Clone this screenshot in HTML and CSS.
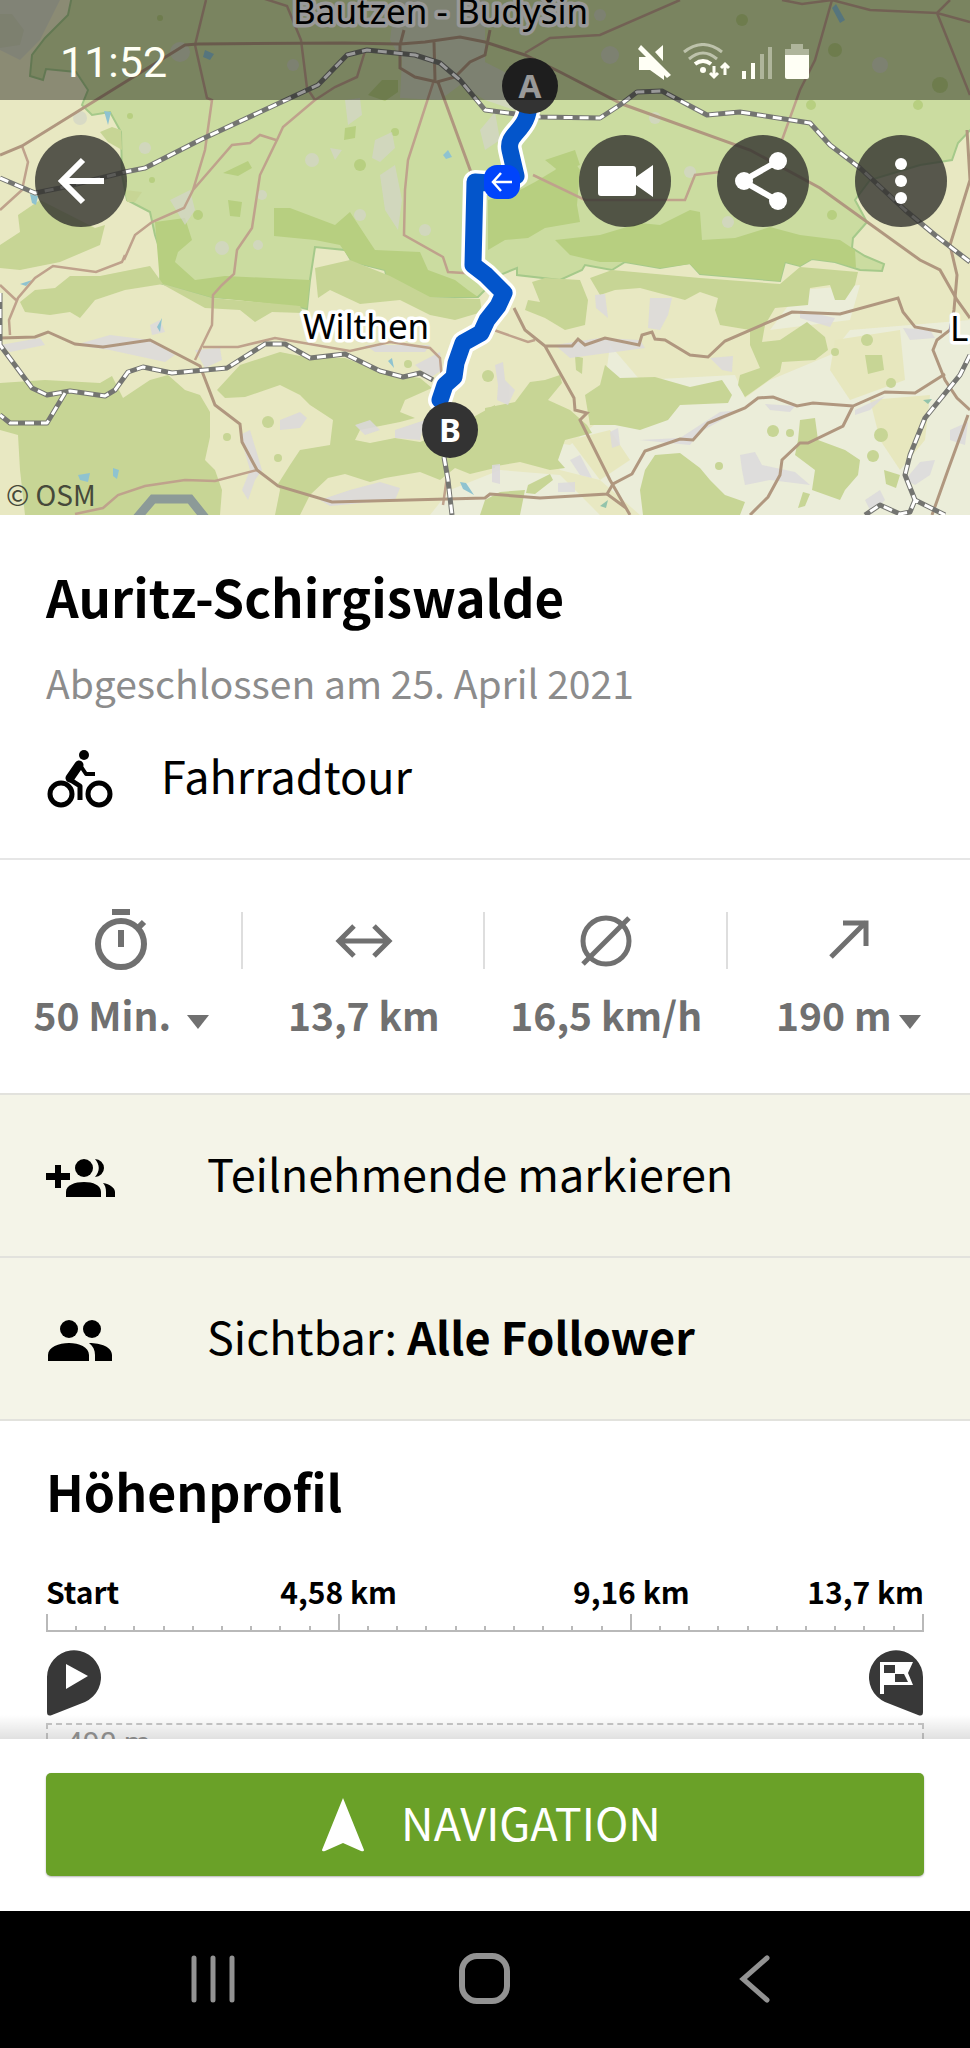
FILE: index.html
```html
<!DOCTYPE html>
<html lang="de">
<head>
<meta charset="utf-8">
<meta name="viewport" content="width=device-width, initial-scale=1">
<title>Auritz-Schirgiswalde</title>
<link rel="stylesheet" href="styles.css">
</head>
<body>
<main class="content">
  <section class="map" aria-label="Karte">
    <svg class="map-canvas" viewBox="0 0 970 515" role="img" aria-label="Route von Bautzen über Wilthen">
      <rect width="970" height="515" fill="#e8e8c2"/>
      <!-- open farmland -->
      <path fill="#ebedd9" d="M610 345 640 380 735 375 745 398 770 380 830 355 850 330 970 320V515H640L600 480 560 470 540 440 570 445 600 420Z M450 490 500 470 560 475 600 515H430Z M800 290 860 285 850 320 770 330Z"/>
      <path fill="#e7e7be" d="M835 340 900 330 905 380 850 400 830 370Z M870 400 930 395 925 440 900 470 880 440Z M570 440 610 430 630 460 600 480Z"/>
      <!-- protected landscape -->
      <path fill="#cbdca0" stroke="#a5c98a" stroke-width="2" d="M72-4 68 15 45 38 32 55 30 76 43 80 46 69 76 72 88 90 82 105 92 115 110 112 121 132 122 175 127 200 150 212 155 235 162 256 160 283 210 297 276 301 307 309 310 280 315 247 345 250 352 262 385 270 388 283 415 288 425 297 478 297 500 275 517 268 517 275 560 280 582 270 585 265 612 270 625 262 660 268 690 263 700 274 780 281 785 262 800 266 812 259 835 262 860 270 882 271 884 264 865 256 852 248 853 238 867 222 855 200 870 180 920 165 952 160 958 143 974 126V-4Z"/>
      <g fill="#b7cf80">
        <path d="M155 222 185 218 192 240 178 252 175 262 195 280 225 276 310 280 307 308 210 297 160 283Z"/>
        <path d="M274 208 290 208 335 225 350 212 367 238 375 250 420 252 428 270 455 280 468 290 478 297 425 297 388 283 385 270 352 262 340 245 315 240 274 236Z"/>
        <path d="M488 200 520 190 535 182 555 170 570 155 580 170 577 205 580 222 545 228 528 238 505 240 488 250Z M545 160 575 150 580 165 560 172Z"/>
        <path d="M555 240 600 235 640 223 660 225 690 210 700 212 702 240 735 238 770 227 800 235 840 240 855 250 856 268 835 262 812 259 800 266 785 262 780 281 700 274 690 264 660 268 625 262 600 262 570 255Z"/>
        <path d="M368 95 382 80 398 80 398 92 385 101Z M223 173 248 161 252 168 238 176Z M228 200 242 202 240 217 230 216Z M345 128 356 126 355 138 344 140Z"/>
        <circle cx="395" cy="132" r="4"/><circle cx="360" cy="165" r="6"/><circle cx="198" cy="215" r="5"/><circle cx="152" cy="180" r="3"/><circle cx="130" cy="116" r="3"/><circle cx="811" cy="105" r="5"/><circle cx="918" cy="105" r="5"/><circle cx="832" cy="215" r="5"/><circle cx="835" cy="50" r="7"/><circle cx="742" cy="20" r="6"/><circle cx="160" cy="18" r="3"/><circle cx="940" cy="85" r="8"/>
      </g>
      <!-- forests -->
      <g fill="#c7d595">
        <path d="M0 14 12 14 24 30 20 45 0 48Z M100 132 112 127 121 130 122 150 108 142Z M0 245 20 232 18 215 40 200 95 228 105 225 100 245 60 262 20 270 0 268Z M125 190 142 192 135 202 127 202Z"/>
        <path d="M25 312 20 302 35 290 55 288 70 276 100 276 150 266 163 284 125 290 95 300 80 318 70 312 50 315Z"/>
        <path d="M0 383 45 380 100 383 112 376 123 398 150 380 168 375 185 390 200 395 210 412 210 437 205 460 215 470 222 490 220 515H25L20 470 18 435 0 430Z"/>
        <path d="M217 390 240 365 280 352 310 358 345 358 385 373 420 378 432 388 405 400 400 412 415 418 400 422 360 430 355 440 370 443 395 438 420 442 450 430 495 405 495 468 470 474 455 468 440 480 420 472 385 478 370 482 345 474 328 478 310 495 300 515H275L280 490 278 484 290 465 300 450 330 445 333 420 310 405 300 395 280 385 245 397 225 398Z"/>
        <path d="M160 283 212 298 300 306 303 313 272 312 255 322 240 310 205 308Z M315 268 350 260 390 276 430 297 480 299 482 312 455 320 430 315 400 300 360 304 330 290 318 298Z"/>
        <path d="M532 282 545 278 580 280 588 300 585 325 565 330 545 318 525 310 528 300 540 302Z"/>
        <path d="M590 278 612 270 700 278 780 284 800 267 858 272 855 285 845 300 835 300 830 285 810 288 808 305 775 308 765 325 762 342 780 340 795 330 807 322 825 337 828 350 815 360 782 362 780 372 762 385 745 397 738 385 740 375 760 368 750 345 750 330 720 325 715 310 718 298 700 292 685 300 640 288 615 290 600 295Z"/>
        <path d="M585 395 600 385 605 365 620 378 655 377 690 387 722 380 732 395 728 403 680 405 668 420 640 430 615 425 590 425Z"/>
        <path d="M485 408 515 402 530 382 545 380 560 375 562 383 548 400 570 410 587 425 592 433 565 440 558 460 565 468 550 470 520 462 485 468Z"/>
        <path d="M645 470 655 455 680 453 700 468 710 480 725 495 745 502 740 515H643L640 490Z"/>
        <path d="M800 420 815 418 818 440 845 450 860 460 858 475 845 490 840 500 812 490 815 470 795 455 798 440Z"/>
        <path d="M528 485 550 474 553 480 535 494 526 493Z M575 356 583 358 582 374 576 370Z M865 355 882 355 884 370 868 374Z M884 470 900 475 896 488 886 484Z M803 492 810 494 805 506 798 508Z M485 500 500 492 525 490 520 515 480 515Z"/>
        <circle cx="773" cy="431" r="6"/><circle cx="790" cy="433" r="4"/><circle cx="881" cy="435" r="7"/><circle cx="873" cy="456" r="6"/><circle cx="268" cy="422" r="6"/><circle cx="278" cy="458" r="4"/><circle cx="227" cy="437" r="4"/><circle cx="488" cy="376" r="6"/><circle cx="891" cy="383" r="5"/><circle cx="867" cy="340" r="6"/><circle cx="835" cy="352" r="4"/><circle cx="719" cy="466" r="4"/><circle cx="408" cy="364" r="4"/>
      </g>
      <!-- settlements -->
      <g fill="#dcd9dc" opacity=".85">
        <path d="M0 345 40 338 45 345 10 352Z M75 345 110 335 150 340 175 355 165 362 110 350Z M195 350 220 348 222 360 205 368Z M150 325 160 320 165 332 152 335Z M280 420 300 412 307 418 300 428 280 430Z M240 435 250 430 262 470 255 480 248 500 242 490 250 470Z M355 425 370 420 380 430 365 435Z M395 430 425 420 420 440 395 438Z M320 500 350 490 380 482 400 488 395 500 330 506Z M415 365 440 352 442 370 430 378Z M365 345 430 345 425 352 375 352Z"/>
        <path d="M650 298 672 298 668 315 660 330 648 328Z M595 295 605 294 608 318 596 308Z M555 345 600 338 640 340 645 348 570 358Z M495 365 503 362 505 380 515 390 508 405 497 400 498 385Z M710 358 733 356 732 372 722 370Z M800 310 835 318 830 327 800 318Z M903 328 930 330 935 338 910 340Z M640 440 680 438 700 425 720 412 740 410 700 432 690 445Z M740 455 755 452 762 465 795 472 810 485 770 480 745 485 742 470Z M765 404 795 406 790 412 770 410Z M855 410 885 396 870 410 855 415Z M905 480 920 462 935 460 930 475 915 485Z M950 430 968 422 965 445 950 440Z M865 500 880 490 885 500 872 514Z M570 460 580 455 592 478 580 475Z M492 465 500 464 500 484 492 482Z M610 432 618 428 620 445 612 448Z M558 483 575 482 575 492 558 492Z"/>
      </g>
      <g fill="#d3d6c7" opacity=".75">
        <path d="M395 0 485 0 485 62 520 80 520 112 485 100 460 85 440 100 400 98 402 60 390 40Z M0 0 60 0 40 40 20 60 0 50Z M345 100 360 98 362 115 348 125Z M375 140 392 132 395 148 380 162 372 158Z M380 175 395 165 402 200 398 230 385 210Z M330 148 342 150 335 160Z M170 200 190 190 195 210 185 225Z M480 130 495 112 500 140 485 150Z"/>
        <circle cx="180" cy="52" r="10"/><circle cx="80" cy="118" r="7"/><circle cx="145" cy="148" r="6"/><circle cx="312" cy="160" r="7"/><circle cx="262" cy="195" r="5"/><circle cx="360" cy="215" r="6"/><circle cx="222" cy="248" r="7"/><circle cx="258" cy="245" r="5"/><circle cx="293" cy="65" r="6"/><circle cx="610" cy="55" r="9"/><circle cx="655" cy="118" r="6"/><circle cx="690" cy="172" r="6"/><circle cx="880" cy="65" r="8"/><circle cx="600" cy="15" r="6"/><circle cx="728" cy="222" r="6"/><circle cx="425" cy="230" r="6"/>
      </g>
      <!-- water -->
      <g fill="#8fc3d0">
        <path d="M104 111 111 112 108 125Z M205 50 214 54 210 60 203 57Z M30 194 38 196 36 205 32 203Z M832 8 836 4 845 20 840 23Z M113 468 119 470 117 479 113 476Z M78 475 90 473 88 482 80 480Z M443 155 448 150 452 157 446 159Z M460 482 466 483 474 495 463 489Z M157 327 162 318 160 332Z M388 361 392 358 394 368Z M20 284 32 280 26 286Z"/>
        <path fill="#93c3ab" d="M600 506 608 500 606 508Z M923 400 932 399 928 404Z"/>
      </g>
      <path d="M136 519 153 499H190L206 519" fill="none" stroke="#8c9a98" stroke-width="9"/>
      <!-- minor roads -->
      <g fill="none" stroke="#bfa28c" stroke-width="2.5">
        <path d="M206 0 195 45 207 98 212 100 205 150 193 190 184 208 152 222 135 235 124 260 M193 190 232 145 250 143 260 135 276 140 M262-2 287 6 301 40 307 88 315 100 283 127 277 140 260 175 252 228 237 250 234 274 222 285 213 295 212 325 195 360 M315 100 335 87 357 77 366 48"/>
        <path d="M434 80 408 160 405 190 404 235 443 257 448 272 480 274 M533 175 585 200 685 200 695 175 720 172 M525 53 550 38 600 35 680 0 M832 0 815 60 800 90 782 140 M22 146 28 162 22 190 0 210 M0 285 16 300 M10 335 9 320 18 298 35 278 53 266 96 272 122 262 125 255"/>
        <path d="M203 347 238 347 275 338 350 351 390 342 430 348 440 358 442 380 M75 514 103 508 118 495 145 486 185 480 215 481 257 470 M491 329 528 342 535 340 M443 505 448 470 M782 0 802 4 832 0 870 10 937 13 950 0 M937 13 970 95 M937 13 970 22"/>
      </g>
      <!-- main roads -->
      <g fill="none" stroke="#b0977f" stroke-width="3">
        <path d="M0 155 22 146 185 45 198 44 345 43 400 44 425 42 460 37 485 42 525 55 560 72 622 104 750 150 820 188 920 260 940 270 957 300 970 318 M404 30 400 45 400 68 415 77 437 82 455 77 470 62 485 55 490 30 M438 82 472 175 M434 42 435 80"/>
        <path d="M0 338 35 337 48 332 75 344 103 347 150 340 200 366 215 405 240 424 242 442 257 470 278 486 332 502 485 498 490 494 540 498 607 494 613 484 632 474 645 451 680 439 693 440 708 423 745 408 758 398 773 397 797 406 813 403 853 406 885 392 915 393 945 374 M853 406 843 426 808 443 800 443 782 460 780 475 768 497 750 515"/>
        <path d="M514 308 525 330 545 346 574 398 575 410 587 413 580 420 610 480 630 515 M545 346 572 346 578 339 585 345 605 338 639 345 642 335 652 332 655 339 665 340 690 355 708 357 725 341 792 312 840 314 898 298 903 312 915 327 942 332 M607 494 626 508 M967 130 970 180 950 245 957 275 954 310 950 330 937 340 933 350 945 380 957 398 970 410 M968 415 948 470 932 515"/>
      </g>
      <!-- railways -->
      <g fill="none" stroke-linejoin="round">
        <path stroke="#747571" stroke-width="5" d="M0 178 35 193 60 188 125 172 145 168 200 140 260 112 318 85 347 55 367 50 415 55 440 63 460 80 485 110 540 117 600 118 620 105 637 92 662 91 707 115 740 112 810 123 830 145 860 168 905 210 935 235 970 262 M0 293V345L32 388 47 395 70 391 105 396 115 390 128 372 143 367 172 373 227 368 265 344 285 344 310 358 345 354 380 371 403 377 420 373 433 380 M65 393 47 423 10 423 0 415 M444 457 448 480 452 515 M970 355 960 375 925 418 910 455 905 475 915 500 945 515 M915 500 910 512 900 514 880 505 865 515"/>
        <path stroke="#fff" stroke-width="3" stroke-dasharray="9 7" d="M0 178 35 193 60 188 125 172 145 168 200 140 260 112 318 85 347 55 367 50 415 55 440 63 460 80 485 110 540 117 600 118 620 105 637 92 662 91 707 115 740 112 810 123 830 145 860 168 905 210 935 235 970 262 M0 293V345L32 388 47 395 70 391 105 396 115 390 128 372 143 367 172 373 227 368 265 344 285 344 310 358 345 354 380 371 403 377 420 373 433 380 M65 393 47 423 10 423 0 415 M444 457 448 480 452 515 M970 355 960 375 925 418 910 455 905 475 915 500 945 515 M915 500 910 512 900 514 880 505 865 515"/>
      </g>
      <!-- recorded route -->
      <g fill="none" stroke-linejoin="round" stroke-linecap="round">
        <path stroke="#fff" stroke-width="24" d="M529 100C530 132 506 132 510 150L516 176 505 184 475 182 473 265 486 275 504 293 498 306 487 320 481 333 463 343 456 363 454 377 445 385 440 400"/>
        <path stroke="#0355cb" stroke-width="17" d="M529 100C530 132 506 132 510 150L516 176 505 184 475 182 473 265 486 275 504 293 498 306 487 320 481 333 463 343 456 363 454 377 445 385 440 400"/>
      </g>
      <rect x="484" y="165" width="36" height="34" rx="13" fill="#0044fb"/>
      <path d="M512 182H493M501 173 493 182 501 191" fill="none" stroke="#fff" stroke-width="2.5"/>
      <circle cx="450" cy="430" r="28" fill="#333"/>
      <text class="pin-label" x="450" y="442">B</text>
      <text class="place" x="303" y="339">Wilthen</text>
      <text class="place" x="950" y="341">L</text>
      <circle cx="530" cy="86" r="28" fill="#333"/>
      <text class="pin-label" x="530" y="98">A</text>
      <text class="place" x="293" y="24">Bautzen - Budyšin</text>
    </svg>
    <p class="credit">© OSM</p>
    <div class="map-overlay">
      <div class="status">
        <span class="clock">11:52</span>
        <span class="status-icons">
          <svg width="34" height="38" viewBox="0 0 34 38" fill="#fffff5"><path d="M1 14H9L26 31V37L12 27H1ZM17 9 25 2V18ZM3 2 33 32 29 35 0 6Z"/></svg>
          <svg width="48" height="38" viewBox="0 0 48 38" fill="none" stroke="#fffff5" stroke-width="3"><path opacity=".5" d="M1 9Q20-6 39 9M6 16Q20 4 34 16"/><path d="M12 21Q20 15 28 21" stroke-width="4"/><circle cx="20" cy="27" r="3" fill="#fffff5" stroke="none"/><path d="M31 23V34M27 30 31 34 35 30M42 32V21M38 25 42 21 46 25"/></svg>
          <svg width="32" height="38" viewBox="0 0 32 38" fill="#fffff5"><rect x="0" y="28" width="4" height="8"/><rect x="9" y="20" width="4" height="16"/><rect x="18" y="11" width="4" height="25" opacity=".4"/><rect x="26" y="4" width="4" height="32" opacity=".4"/></svg>
          <svg width="24" height="38" viewBox="0 0 24 38" fill="#fffff5"><path opacity=".4" d="M6 1H18V6H24V12H0V6H6Z"/><path d="M0 12H24V34Q24 36 22 36H2Q0 36 0 34Z"/></svg>
        </span>
      </div>
      <div class="toolbar">
        <button class="round back" aria-label="Zurück"><svg width="56" height="56" viewBox="0 0 56 56" fill="none" stroke="#fff" stroke-width="6"><path d="M51 28H8M30 7 9 28 30 49"/></svg></button>
        <button class="round" aria-label="Video"><svg width="56" height="56" viewBox="0 0 56 56" fill="#fff"><path d="M3 13H36Q39 13 39 16V24L56 12V44L39 32V40Q39 43 36 43H4Q1 43 1 40V15Q1 13 3 13Z"/></svg></button>
        <button class="round" aria-label="Teilen"><svg width="60" height="60" viewBox="0 0 60 60" fill="#fff"><path d="M45 10 10 30 45 50" fill="none" stroke="#fff" stroke-width="6"/><circle cx="45" cy="10" r="9"/><circle cx="11" cy="30" r="9"/><circle cx="45" cy="50" r="9"/></svg></button>
        <button class="round" aria-label="Mehr"><svg width="56" height="56" viewBox="0 0 56 56" fill="#fff"><circle cx="28" cy="11" r="6"/><circle cx="28" cy="28" r="6"/><circle cx="28" cy="45" r="6"/></svg></button>
      </div>
    </div>
  </section>

  <section class="summary">
    <h1>Auritz-Schirgiswalde</h1>
    <p class="date">Abgeschlossen am 25. April 2021</p>
    <p class="sport">
      <svg width="68" height="60" viewBox="0 0 68 60" fill="none" stroke="#000"><circle cx="15" cy="45" r="11" stroke-width="5"/><circle cx="53" cy="45" r="11" stroke-width="5"/><circle cx="38" cy="6" r="5" fill="#000" stroke="none"/><path d="M33 16 24 29" stroke-width="9" stroke-linecap="round"/><path d="M34 16 40 25H49" stroke-width="4" stroke-linejoin="round"/><path d="M23 30 34 37V51" stroke-width="5" stroke-linejoin="round"/></svg>
      <span>Fahrradtour</span>
    </p>
  </section>

  <section class="stats" aria-label="Statistik">
    <div class="stat">
      <div class="stat-icon"><svg width="64" height="64" viewBox="0 0 64 64" fill="none" stroke="#707070" stroke-width="6"><circle cx="32" cy="38" r="23"/><path d="M23 6H41M32 24V41M49 22 55 16"/></svg></div>
      <button class="stat-value spaced">50 Min.<i class="caret"></i></button>
    </div>
    <div class="stat">
      <div class="stat-icon"><svg width="64" height="64" viewBox="0 0 64 64" fill="none" stroke="#707070" stroke-width="5"><path d="M8 35H56M22 20 7 35 22 50M42 20 57 35 42 50"/></svg></div>
      <p class="stat-value">13,7 km</p>
    </div>
    <div class="stat">
      <div class="stat-icon"><svg width="64" height="64" viewBox="0 0 64 64" fill="none" stroke="#707070" stroke-width="5"><circle cx="32" cy="35" r="23"/><path d="M9 58 55 12"/></svg></div>
      <p class="stat-value">16,5 km/h</p>
    </div>
    <div class="stat">
      <div class="stat-icon"><svg width="64" height="64" viewBox="0 0 64 64" fill="none" stroke="#707070" stroke-width="5"><path d="M14 51 49 16M26 17H49V40"/></svg></div>
      <button class="stat-value">190 m<i class="caret"></i></button>
    </div>
  </section>

  <button class="row">
    <svg width="72" height="44" viewBox="0 -5 72 44"><path d="M9 6H15V14H24V21H15V29H9V21H0V14H9ZM20 38V33C20 26 29 23 38 23S55 26 55 33V38ZM57 24C64 25 69 29 69 33V38H60V33C60 29 59 26 57 24ZM49 0A9 9 0 0 1 49 18C54 12 54 6 49 0Z"/><circle cx="38" cy="9" r="9"/></svg>
    <span>Teilnehmende markieren</span>
  </button>
  <button class="row">
    <svg width="72" height="44" viewBox="0 -2 72 44"><path d="M2 42V36C2 28 13 24 23 24S43 28 43 36V42ZM43 24C55 24 66 28 66 36V42H49V36C49 31 47 27 43 24Z"/><circle cx="23" cy="10" r="9"/><circle cx="46" cy="10" r="9"/></svg>
    <span>Sichtbar: <b>Alle Follower</b></span>
  </button>

  <section class="profile">
    <h2>Höhenprofil</h2>
    <div class="axis-labels"><span>Start</span><span>4,58 km</span><span>9,16 km</span><span>13,7 km</span></div>
    <svg class="axis" viewBox="0 0 878 18" preserveAspectRatio="none" fill="none" stroke="#b9b9b9" stroke-width="2"><path d="M1 0V17H877V0M293 0V17M585 0V17"/><path d="M30 12V17M59 12V17M88 12V17M118 12V17M147 12V17M176 12V17M205 12V17M234 12V17M264 12V17M322 12V17M351 12V17M380 12V17M410 12V17M439 12V17M468 12V17M497 12V17M526 12V17M556 12V17M614 12V17M643 12V17M672 12V17M702 12V17M731 12V17M760 12V17M789 12V17M818 12V17M848 12V17"/></svg>
    <div class="flags">
      <svg width="56" height="68" viewBox="0 0 56 68"><path fill="#383838" d="M1 28A27 27 0 1 1 39 53L6 66Q1 68 1 63Z"/><path fill="#fff" d="M20 15 42 27 20 40Z"/></svg>
      <svg width="56" height="68" viewBox="0 0 56 68"><path fill="#383838" d="M55 28A27 27 0 1 0 17 53L50 66Q55 68 55 63Z"/><path fill="#fff" d="M12 13H45L40 24 45 36H16V45H12Z"/><path fill="#383838" d="M16 16H27V24H16ZM27 25H36L40 33H27Z"/></svg>
    </div>
    <div class="chart"><span>490 m</span></div>
  </section>
</main>

<div class="action-bar">
  <button class="navigate">
    <svg width="44" height="56" viewBox="0 0 44 56" fill="#fff"><path d="M22 1 43 53Q43 55 40 54L22 46 4 54Q1 55 1 53Z"/></svg>
    <span>NAVIGATION</span>
  </button>
</div>

<nav class="system-nav">
  <button aria-label="Letzte Apps"><svg width="56" height="56" viewBox="0 0 56 56" stroke="#929292" stroke-width="5" stroke-linecap="round"><path d="M9 7V49M28 7V49M47 7V49"/></svg></button>
  <button aria-label="Startseite"><svg width="56" height="56" viewBox="0 0 56 56" fill="none" stroke="#929292" stroke-width="6"><rect x="5" y="5" width="45" height="45" rx="15"/></svg></button>
  <button aria-label="Zurück"><svg width="56" height="56" viewBox="0 0 56 56" fill="none" stroke="#929292" stroke-width="5" stroke-linecap="round"><path d="M38 7 14 28 38 49"/></svg></button>
</nav>
</body>
</html>
```

FILE: styles.css
```css
* { box-sizing: border-box; }

body {
  margin: 0;
  height: 100vh;
  display: flex;
  flex-direction: column;
  background: #fff;
  color: #000;
  font-family: "Noto Sans CJK SC", "Noto Sans", sans-serif;
}

h1, h2, p { margin: 0; }

button {
  margin: 0;
  padding: 0;
  border: 0;
  background: none;
  color: inherit;
  font: inherit;
  cursor: pointer;
}

svg { display: block; flex: none; }

.content {
  flex: 1;
  min-height: 0;
  overflow-y: auto;
  scrollbar-width: none;
}

/* Map header */
.map { position: relative; }
.map-canvas { width: 100%; height: auto; }

.place {
  font: 35px "Noto Sans", sans-serif;
  fill: #000;
  stroke: #fff;
  stroke-width: 7px;
  stroke-linejoin: round;
  paint-order: stroke;
}

.pin-label {
  font: bold 33px "Noto Sans", sans-serif;
  fill: #fff;
  text-anchor: middle;
}

.credit {
  position: absolute;
  left: 6px;
  bottom: 0;
  font-size: 28px;
  line-height: 42px;
  color: #46493a;
}

.map-overlay {
  position: absolute;
  top: 0;
  left: 0;
  right: 0;
}

.status {
  height: 100px;
  padding: 24px 161px 0 60px;
  display: flex;
  align-items: center;
  justify-content: space-between;
  background: rgba(0, 0, 0, .4);
  color: #fffff5;
}

.clock { font: 43px/52px Roboto, sans-serif; }
.status-icons { display: flex; gap: 11px; }

.toolbar {
  display: flex;
  gap: 46px;
  padding: 35px 23px 0 35px;
}

.round {
  width: 92px;
  height: 92px;
  border-radius: 50%;
  display: flex;
  align-items: center;
  justify-content: center;
  background: rgba(50, 50, 46, .8);
}

.back { margin-right: auto; }

/* Tour summary */
.summary {
  padding: 45px 46px 49px;
  border-bottom: 2px solid #e6e6e6;
}

h1, h2 {
  font-size: 51px;
  line-height: 72px;
  font-weight: bold;
}

h2 { font-size: 50px; }

.date {
  margin-top: 20px;
  font-size: 39px;
  line-height: 60px;
  color: #8c8c8c;
}

.sport {
  margin-top: 29px;
  display: flex;
  align-items: flex-end;
  gap: 47px;
  font-size: 45px;
  line-height: 68px;
}

/* Figures */
.stats {
  display: grid;
  grid-template-columns: repeat(4, 1fr);
  padding: 46px 0 47px;
  border-bottom: 2px solid #e2e2dd;
}

.stat { text-align: center; }

.stat-icon {
  display: flex;
  justify-content: center;
  height: 64px;
  background: linear-gradient(#dedede, #dedede) right 6px / 2px 57px no-repeat;
}

.stat:last-child .stat-icon { background: none; }

.stat-value {
  margin-top: 12px;
  font-size: 39px;
  line-height: 64px;
  font-weight: bold;
  color: #707070;
}

.caret {
  display: inline-block;
  margin-left: 8px;
  vertical-align: 2px;
  border: 11px solid transparent;
  border-top: 14px solid #707070;
  border-bottom: 0;
}

.spaced .caret { margin-left: 16px; }

/* Option rows */
.row {
  width: 100%;
  height: 163px;
  padding: 0 46px;
  display: flex;
  align-items: center;
  gap: 89px;
  background: #f4f4e8;
  border-bottom: 2px solid #e2e2dd;
  font-size: 45px;
  line-height: 68px;
  text-align: left;
}

.row span { padding-bottom: 6px; }

/* Elevation profile */
.profile { padding: 33px 46px 0; }

.axis-labels {
  margin-top: 43px;
  padding-bottom: 1px;
  display: grid;
  grid-template-columns: 1fr 2fr 2fr 1fr;
  font-size: 30px;
  line-height: 44px;
  font-weight: bold;
  text-align: center;
  white-space: nowrap;
}

.axis-labels span:first-child { text-align: left; }
.axis-labels span:last-child { justify-self: end; }

.axis {
  width: 100%;
  height: 18px;
}

.flags {
  margin-top: 17px;
  display: flex;
  justify-content: space-between;
}

.chart {
  margin-top: 6px;
  height: 400px;
  padding: 0 18px;
  border: 2px dashed #cacaca;
  font: 30px/36px Roboto, sans-serif;
  color: #999;
}

/* Bottom action */
.action-bar {
  position: relative;
  padding: 34px 46px 35px;
  background: #fff;
}

.action-bar::before {
  content: "";
  position: absolute;
  left: 0;
  right: 0;
  bottom: 100%;
  height: 24px;
  background: linear-gradient(rgba(0, 0, 0, 0), rgba(0, 0, 0, .12));
}

.navigate {
  width: 100%;
  height: 103px;
  padding-left: 12px;
  display: flex;
  align-items: center;
  justify-content: center;
  gap: 36px;
  border-radius: 5px;
  background: #6aa128;
  box-shadow: 0 1px 2px rgba(0, 0, 0, .3);
  color: #fff;
  font-size: 45px;
  line-height: 68px;
}

.navigate span { padding-bottom: 6px; }

.system-nav {
  height: 137px;
  padding: 0 77px 2px;
  display: flex;
  justify-content: space-around;
  align-items: center;
  background: #000;
}
```
